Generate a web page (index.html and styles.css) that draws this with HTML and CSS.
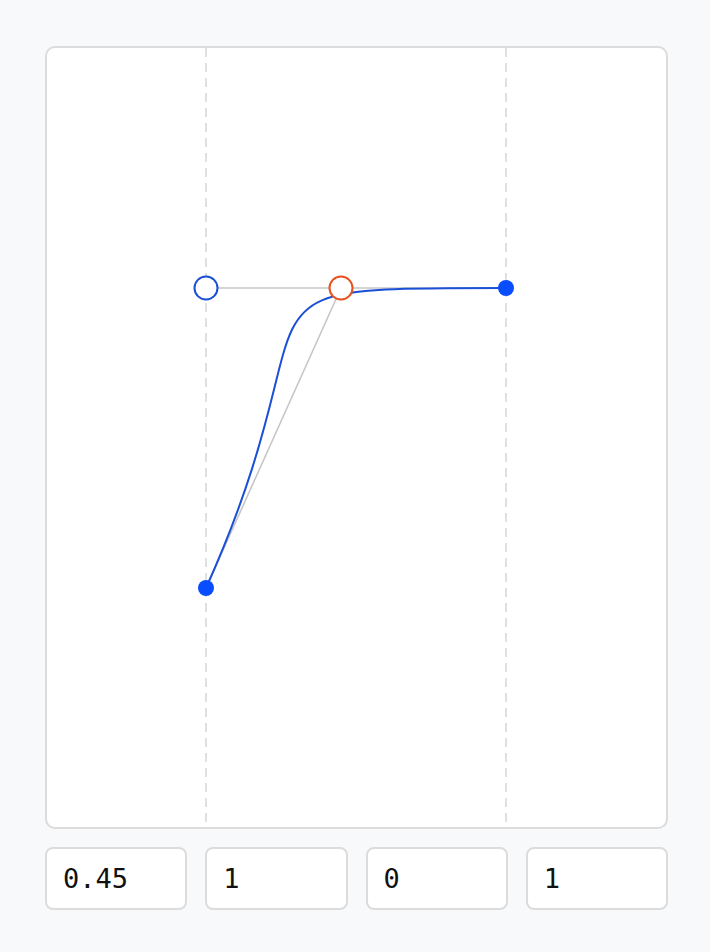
FILE: index.html
```html
<!DOCTYPE html>
<html>
<head>
<meta charset="utf-8">
<link rel="stylesheet" href="styles.css">
</head>
<body>
<div class="wrap">
  <div class="card">
    <svg class="plot" width="619" height="779" viewBox="0 0 619 779">
      <line class="grid" x1="159" y1="0" x2="159" y2="779"/>
      <line class="grid" x1="459" y1="0" x2="459" y2="779"/>
      <line class="handle" x1="159" y1="540" x2="294" y2="240"/>
      <line class="handle" x1="459" y1="240" x2="159" y2="240"/>
      <path class="curve" d="M159 540 C294 240 159 240 459 240"/>
      <circle class="end" cx="159" cy="540" r="8"/>
      <circle class="end" cx="459" cy="240" r="8"/>
      <circle class="cp2" cx="159" cy="240" r="11.5"/>
      <circle class="cp1" cx="294" cy="240" r="11.5"/>
    </svg>
  </div>
  <div class="inputs">
    <div class="field">0.45</div>
    <div class="field">1</div>
    <div class="field">0</div>
    <div class="field">1</div>
  </div>
</div>
</body>
</html>
```

FILE: styles.css
```css
html, body {
  margin: 0;
  padding: 0;
  background: #f8f9fb;
}
.wrap {
  width: 623px;
  margin-left: 45px;
  padding-top: 46px;
  display: flex;
  flex-direction: column;
  gap: 18px;
}
.card {
  box-sizing: border-box;
  width: 623px;
  height: 783px;
  border: 2px solid #dcdcdc;
  border-radius: 10px;
  background: #ffffff;
  overflow: hidden;
}
.plot {
  display: block;
}
.grid {
  stroke: #d6d6d6;
  stroke-width: 1.5;
  stroke-dasharray: 9 6;
}
.handle {
  stroke: #c6c6c6;
  stroke-width: 1.6;
}
.curve {
  fill: none;
  stroke: #1a4fd6;
  stroke-width: 2;
}
.end {
  fill: #0a4dff;
}
.cp1 {
  fill: #ffffff;
  stroke: #e8501a;
  stroke-width: 2;
}
.cp2 {
  fill: #ffffff;
  stroke: #1a4fd6;
  stroke-width: 2;
}
.inputs {
  display: grid;
  grid-template-columns: repeat(4, 1fr);
  gap: 18px;
}
.field {
  box-sizing: border-box;
  height: 63px;
  border: 2px solid #dcdcdc;
  border-radius: 8px;
  background: #ffffff;
  padding-left: 16px;
  display: flex;
  align-items: center;
  font-family: "DejaVu Sans Mono", monospace;
  font-size: 27px;
  color: #111;
}
```
